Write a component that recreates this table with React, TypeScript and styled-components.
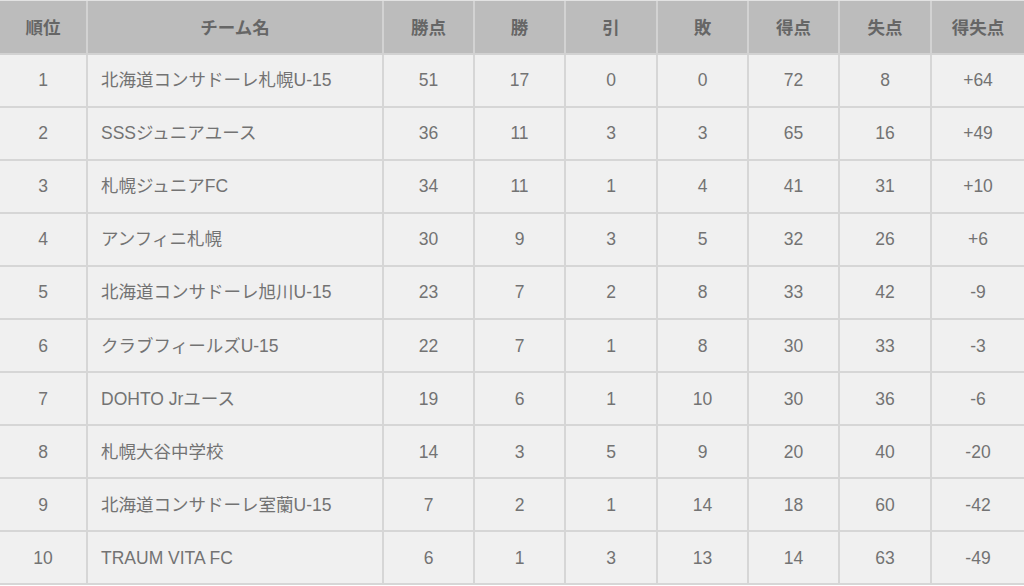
import React from "react";
import styled, { createGlobalStyle } from "styled-components";

const Global = createGlobalStyle`
  html, body { margin: 0; padding: 0; background: #ffffff; overflow: hidden; }
  body { font-family: "Liberation Sans", "Noto Sans CJK JP", sans-serif; }
`;

const Table = styled.table`
  border-collapse: separate;
  border-spacing: 0;
  table-layout: fixed;
  width: 1026px;
  border-top: 1px solid #e2e2e2;
  color: #737373;
  font-size: 17.5px;
`;

const HeadCell = styled.th`
  height: 51.5px;
  padding: 0;
  background: #bcbcbc;
  color: #666666;
  font-family: "Noto Sans CJK JP", sans-serif;
  font-weight: 700;
  text-align: center;
  border-right: 2px solid #d2d2d2;
  border-bottom: 2px solid #d2d2d2;
  box-sizing: content-box;
`;

const Cell = styled.td<{ $left?: boolean }>`
  height: 51.1px;
  padding: 0 0 0 ${(p) => (p.$left ? "13px" : "0")};
  background: #f0f0f0;
  font-weight: 400;
  line-height: 24px;
  text-align: ${(p) => (p.$left ? "left" : "center")};
  border-right: 2px solid #d6d6d6;
  border-bottom: 2px solid #d6d6d6;
  white-space: nowrap;
  box-sizing: content-box;
`;

const Jp = styled.span`
  font-family: "Noto Sans CJK JP", sans-serif;
  line-height: 14px;
`;

const widths = [88, 296, 91, 91, 92, 91, 91, 92, 94];
const heads = ["順位", "チーム名", "勝点", "勝", "引", "敗", "得点", "失点", "得失点"];

const rows: (string | number)[][] = [
  [1, "北海道コンサドーレ札幌U-15", 51, 17, 0, 0, 72, 8, "+64"],
  [2, "SSSジュニアユース", 36, 11, 3, 3, 65, 16, "+49"],
  [3, "札幌ジュニアFC", 34, 11, 1, 4, 41, 31, "+10"],
  [4, "アンフィニ札幌", 30, 9, 3, 5, 32, 26, "+6"],
  [5, "北海道コンサドーレ旭川U-15", 23, 7, 2, 8, 33, 42, "-9"],
  [6, "クラブフィールズU-15", 22, 7, 1, 8, 30, 33, "-3"],
  [7, "DOHTO Jrユース", 19, 6, 1, 10, 30, 36, "-6"],
  [8, "札幌大谷中学校", 14, 3, 5, 9, 20, 40, "-20"],
  [9, "北海道コンサドーレ室蘭U-15", 7, 2, 1, 14, 18, 60, "-42"],
  [10, "TRAUM VITA FC", 6, 1, 3, 13, 14, 63, "-49"],
];

const cjk = /([\u3000-\u30ff\u4e00-\u9fff\uff00-\uffef]+)/;

function TeamText({ text }: { text: string }) {
  const parts = text.split(cjk).filter((s) => s.length > 0);
  return (
    <>
      {parts.map((p, i) => (cjk.test(p) ? <Jp key={i}>{p}</Jp> : <React.Fragment key={i}>{p}</React.Fragment>))}
    </>
  );
}

export default function App() {
  return (
    <>
      <Global />
      <Table>
        <colgroup>
          {widths.map((w, i) => (
            <col key={i} style={{ width: w }} />
          ))}
        </colgroup>
        <thead>
          <tr>
            {heads.map((h) => (
              <HeadCell key={h}>{h}</HeadCell>
            ))}
          </tr>
        </thead>
        <tbody>
          {rows.map((r) => (
            <tr key={String(r[0])}>
              {r.map((v, i) => (
                <Cell key={i} $left={i === 1}>
                  {typeof v === "string" ? <TeamText text={v} /> : v}
                </Cell>
              ))}
            </tr>
          ))}
        </tbody>
      </Table>
    </>
  );
}
